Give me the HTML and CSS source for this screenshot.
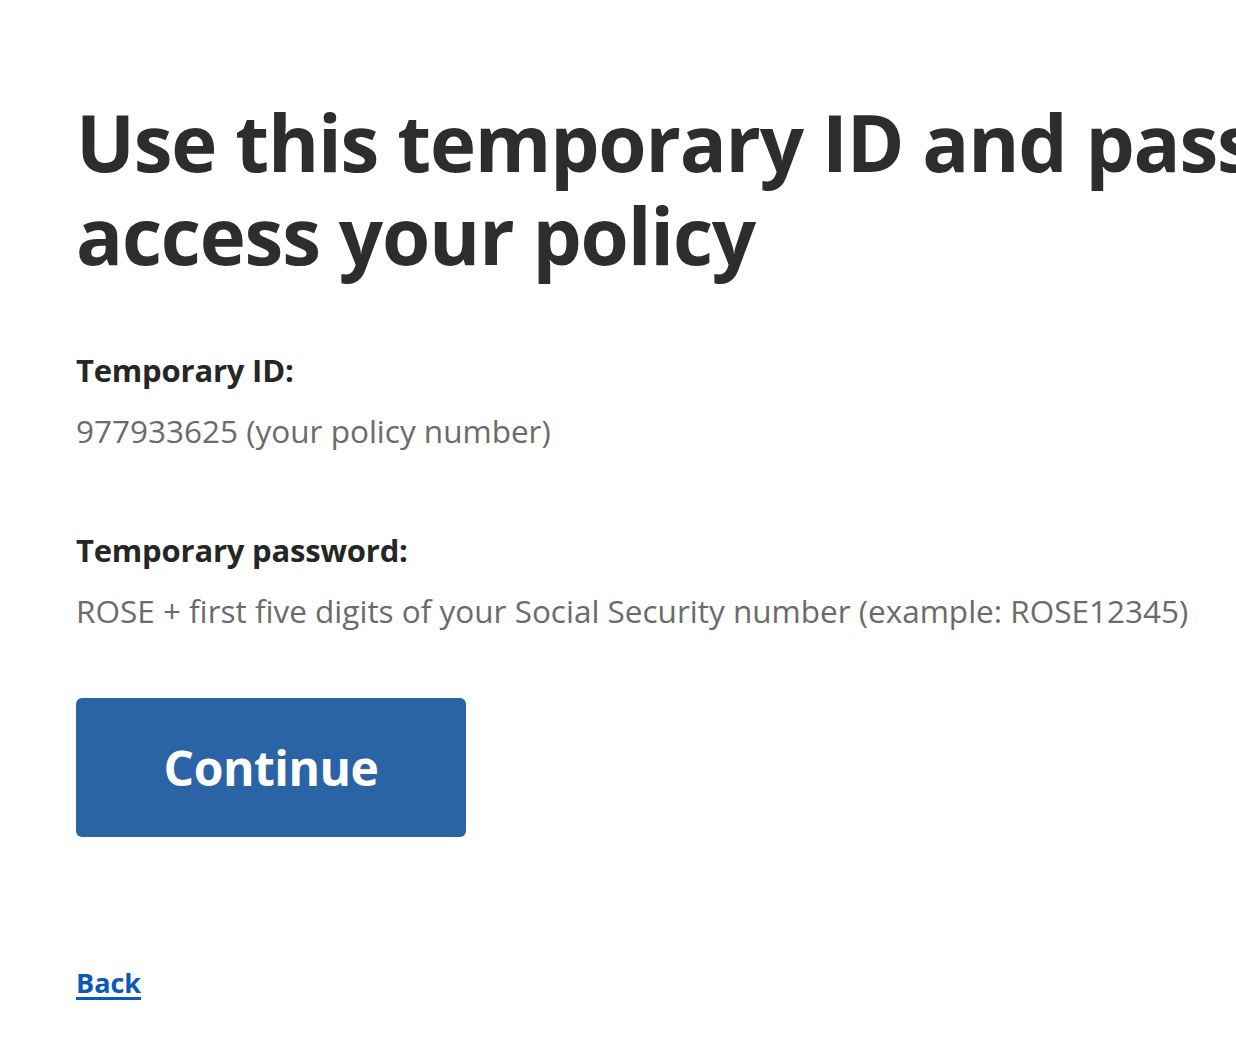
FILE: index.html
```html
<!DOCTYPE html>
<html lang="en">
<head>
<meta charset="utf-8">
<title>Temporary ID and password</title>
<link rel="stylesheet" href="styles.css">
</head>
<body>
<main class="page">
  <h1 class="title">Use this temporary ID and password to<br>access your policy</h1>
  <section class="field">
    <h2 class="field-label">Temporary ID:</h2>
    <p class="field-value">977933625 (your policy number)</p>
  </section>
  <section class="field">
    <h2 class="field-label">Temporary password:</h2>
    <p class="field-value">ROSE + first five digits of your Social Security number (example: ROSE12345)</p>
  </section>
  <button class="btn-primary" type="button">Continue</button>
  <a class="back-link" href="#">Back</a>
</main>
</body>
</html>
```
FILE: styles.css
```css
html, body {
  margin: 0;
  padding: 0;
  background: #ffffff;
  overflow: hidden;
}
.page {
  display: flex;
  flex-direction: column;
  align-items: flex-start;
  padding: 96px 0 0 76px;
  font-family: "Open Sans", "Liberation Sans", sans-serif;
  color: #2d2d2d;
}
.title {
  margin: 0;
  font-size: 78px;
  line-height: 93px;
  font-weight: 700;
  letter-spacing: -1.2px;
  white-space: nowrap;
  color: #2d2d2d;
}
.field {
  margin-top: 68px;
}
.field + .field {
  margin-top: 78px;
}
.field-label {
  margin: 0;
  font-size: 31px;
  line-height: 40px;
  font-weight: 700;
  letter-spacing: -0.2px;
  color: #262626;
}
.field-value {
  margin: 20px 0 0;
  font-size: 31.5px;
  line-height: 42px;
  font-weight: 400;
  letter-spacing: 0;
  color: #6b6b6b;
}
.btn-primary {
  margin-top: 66px;
  width: 390px;
  height: 139px;
  border: none;
  border-radius: 6px;
  background: #2a63a6;
  color: #ffffff;
  font-family: "Open Sans", "Liberation Sans", sans-serif;
  font-size: 48px;
  font-weight: 700;
  letter-spacing: -0.5px;
  cursor: pointer;
}
.back-link {
  margin-top: 128px;
  font-size: 27px;
  line-height: 36px;
  font-weight: 700;
  color: #0a58b8;
  text-decoration: underline;
  text-decoration-thickness: 3px;
  text-underline-offset: 4px;
}
```
